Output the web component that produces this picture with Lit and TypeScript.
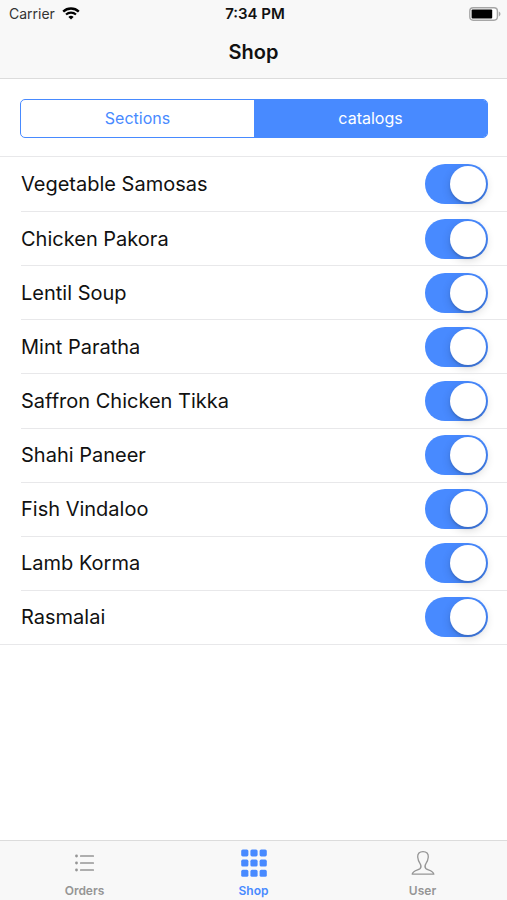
import { LitElement, html, css, svg } from "lit";
import { customElement, state } from "lit/decorators.js";
import { classMap } from "lit/directives/class-map.js";

const wifiIcon = html`<svg class="wifi" viewBox="0 0 18 13" aria-hidden="true">
  <path d="M1.2 4.6C5.5.5 12.5.5 16.8 4.6" fill="none" stroke="#000" stroke-width="2.4"/>
  <path d="M4 7.6C6.800 5 11.200 5 14 7.600" fill="none" stroke="#000" stroke-width="2.1"/>
  <path d="M6.400 9.900C7.900 8.500 10.100 8.500 11.600 9.900L9 12.600Z" fill="#000"/>
</svg>`;

const batteryIcon = html`<svg class="battery" viewBox="0 0 32 14" aria-hidden="true">
  <rect x=".8" y=".8" width="27.6" height="12.4" rx="3.4" fill="#fff" stroke="#a6a6a6" stroke-width="1.4"/>
  <rect x="2.6" y="2.6" width="20.6" height="8.8" rx="1" fill="#000"/>
  <path d="M29.800 4.600C32 5.400 32 8.600 29.800 9.400Z" fill="#a6a6a6"/>
</svg>`;

const ordersIcon = svg`<g fill="currentColor">
  ${[7, 14, 21].map((y) => svg`
    <circle cx="5.5" cy=${y} r="1.4"/>
    <rect x="9" y=${y - 0.8} width="14" height="1.6" rx=".6"/>`)}
</g>`;

const shopIcon = svg`<g fill="currentColor">
  ${[0.4, 10.6, 20.8].map((y) => [1.2, 10.4, 19.6].map((x) => svg`
    <rect x=${x} y=${y} width="7.2" height="7" rx="1.6"/>`))}
</g>`;

const userIcon = svg`<path fill="none" stroke="currentColor" stroke-width="1.3" stroke-linejoin="round"
  d="M14 2.600C10.400 2.600 8.500 4.700 8.700 8C8.900 10.900 9.700 12.700 11.200 14.800C12.200 16.400 12.100 18.400 11.200 19.500C9.800 21 3.800 21.200 3.200 25.200H24.800C24.200 21.200 18.200 21 16.800 19.500C15.900 18.400 15.800 16.400 16.800 14.800C18.300 12.700 19.100 10.900 19.300 8C19.500 4.700 17.600 2.600 14 2.600Z"/>`;

const TABS = [
  { label: "Orders", icon: ordersIcon },
  { label: "Shop", icon: shopIcon },
  { label: "User", icon: userIcon },
];

@customElement("app-root")
export class AppRoot extends LitElement {
  @state() private segment = "catalogs";
  @state() private tab = "Shop";
  @state() private items = [
    "Vegetable Samosas",
    "Chicken Pakora",
    "Lentil Soup",
    "Mint Paratha",
    "Saffron Chicken Tikka",
    "Shahi Paneer",
    "Fish Vindaloo",
    "Lamb Korma",
    "Rasmalai",
  ];

  static styles = css`
    :host {
      display: flex;
      flex-direction: column;
      min-height: 100vh;
      background: #fff;
      color: #111;
      font-family: Inter, "Liberation Sans", sans-serif;
    }
    * { box-sizing: border-box; }
    button {
      margin: 0;
      padding: 0;
      border: 0;
      background: none;
      font: inherit;
      cursor: pointer;
    }
    header {
      background: #f8f8f8;
      border-bottom: 1px solid #dcdcdc;
    }
    .status {
      display: grid;
      grid-template-columns: 1fr auto 1fr;
      align-items: center;
      height: 27px;
      padding: 0 6px 0 9px;
      font-size: 14px;
    }
    .carrier { display: flex; align-items: center; gap: 7px; color: #333; }
    .clock { font-size: 15px; font-weight: 600; }
    .wifi { width: 18px; height: 13px; }
    .battery { width: 32px; height: 14px; justify-self: end; }
    h1 {
      margin: 0;
      height: 51px;
      line-height: 50px;
      text-align: center;
      font-size: 20px;
      font-weight: 600;
    }
    main { flex: 1; }
    .segments {
      display: grid;
      grid-template-columns: 1fr 1fr;
      height: 39px;
      margin: 20px 19px 18px 20px;
      border: 1px solid #488aff;
      border-radius: 5px;
      overflow: hidden;
    }
    .segment { padding-bottom: 2px; color: #488aff; font-size: 16px; }
    .segment.active { background: #488aff; color: #fff; }
    .list {
      display: grid;
      grid-auto-rows: 1fr;
      min-height: 489px;
      margin: 0;
      padding: 0;
      list-style: none;
      border-top: 1px solid #e8e8ea;
      border-bottom: 1px solid #e8e8ea;
    }
    .row { padding-left: 21px; }
    .row label {
      display: flex;
      align-items: center;
      justify-content: space-between;
      height: 100%;
      padding-right: 19px;
      font-size: 20px;
    }
    .row + .row label { border-top: 1px solid #e8e8ea; }
    .toggle {
      appearance: none;
      flex: none;
      display: flex;
      align-items: center;
      width: 63px;
      height: 40px;
      margin: 0;
      padding: 0 2px;
      border-radius: 20px;
      background: #e6e6e6;
      cursor: pointer;
    }
    .toggle::before {
      content: "";
      width: 36px;
      height: 36px;
      border-radius: 50%;
      background: #fff;
      box-shadow: 0 3px 10px rgba(0, 0, 0, 0.16), 0 2px 2px rgba(0, 0, 0, 0.12);
    }
    .toggle:checked { background: #488aff; justify-content: flex-end; }
    nav {
      display: grid;
      grid-template-columns: repeat(3, 1fr);
      height: 60px;
      background: #f8f8f8;
      border-top: 1px solid #dcdcdc;
    }
    .tab {
      display: flex;
      flex-direction: column;
      align-items: center;
      gap: 6px;
      padding-top: 8px;
      color: #959595;
      font-size: 12px;
      line-height: 16px;
      font-weight: 600;
    }
    .tab.active { color: #488aff; }
    .tab svg { width: 28px; height: 28px; }
  `;

  render() {
    return html`
      <header>
        <div class="status">
          <span class="carrier">Carrier ${wifiIcon}</span>
          <span class="clock">7:34 PM</span>
          ${batteryIcon}
        </div>
        <h1>Shop</h1>
      </header>
      <main>
        <div class="segments">
          ${["Sections", "catalogs"].map((name) => html`
            <button
              class=${classMap({ segment: true, active: this.segment === name })}
              aria-pressed=${this.segment === name}
              @click=${() => (this.segment = name)}
            >${name}</button>`)}
        </div>
        <ul class="list">
          ${this.items.map((name) => html`
            <li class="row">
              <label>${name}<input class="toggle" type="checkbox" role="switch" checked></label>
            </li>`)}
        </ul>
      </main>
      <nav>
        ${TABS.map(({ label, icon }) => html`
          <button
            class=${classMap({ tab: true, active: this.tab === label })}
            @click=${() => (this.tab = label)}
          ><svg viewBox="0 0 28 28" aria-hidden="true">${icon}</svg>${label}</button>`)}
      </nav>
    `;
  }
}
